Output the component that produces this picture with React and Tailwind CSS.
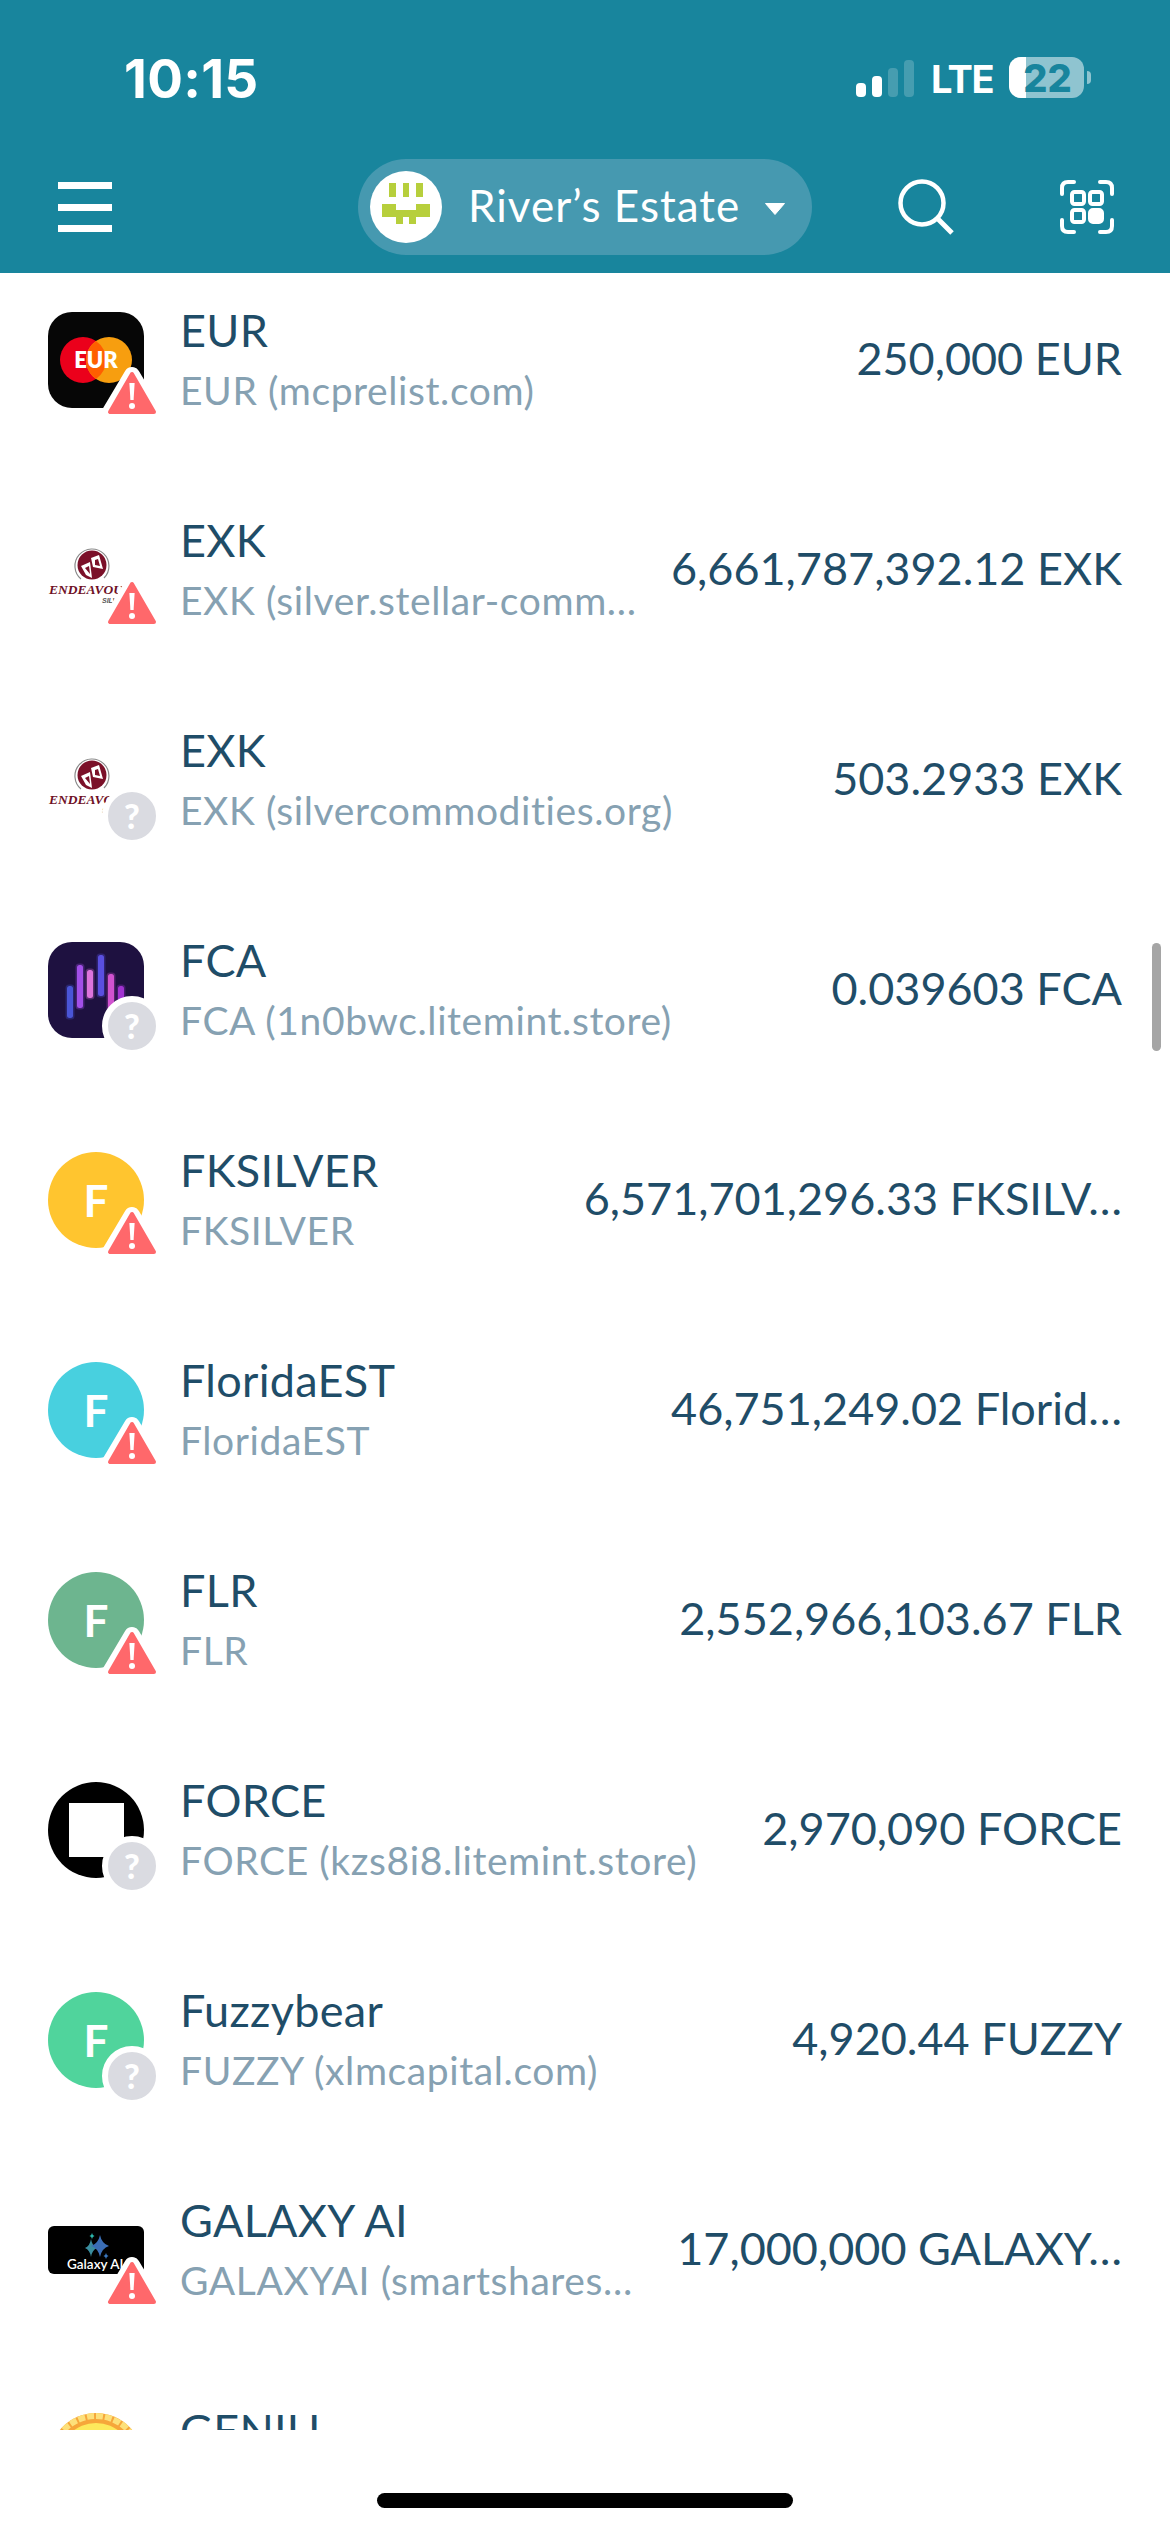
import React from 'react';

const ASSETS = [
  { title: 'EUR', sub: 'EUR (mcprelist.com)', amount: '250,000 EUR', icon: 'eur', badge: 'warn' },
  { title: 'EXK', sub: 'EXK (silver.stellar-comm…', amount: '6,661,787,392.12 EXK', icon: 'endeavour', badge: 'warn' },
  { title: 'EXK', sub: 'EXK (silvercommodities.org)', amount: '503.2933 EXK', icon: 'endeavour', badge: 'unknown' },
  { title: 'FCA', sub: 'FCA (1n0bwc.litemint.store)', amount: '0.039603 FCA', icon: 'fca', badge: 'unknown' },
  { title: 'FKSILVER', sub: 'FKSILVER', amount: '6,571,701,296.33 FKSILV…', icon: 'yellow', badge: 'warn' },
  { title: 'FloridaEST', sub: 'FloridaEST', amount: '46,751,249.02 Florid…', icon: 'cyan', badge: 'warn' },
  { title: 'FLR', sub: 'FLR', amount: '2,552,966,103.67 FLR', icon: 'green', badge: 'warn' },
  { title: 'FORCE', sub: 'FORCE (kzs8i8.litemint.store)', amount: '2,970,090 FORCE', icon: 'force', badge: 'unknown' },
  { title: 'Fuzzybear', sub: 'FUZZY (xlmcapital.com)', amount: '4,920.44 FUZZY', icon: 'mint', badge: 'unknown' },
  { title: 'GALAXY AI', sub: 'GALAXYAI (smartshares…', amount: '17,000,000 GALAXY…', icon: 'galaxy', badge: 'warn' },
  { title: 'GENIU', sub: '\u00a0', amount: '', icon: 'coin', badge: null },
];

function WarnBadge() {
  return (
    <svg className="absolute left-[51px] top-[51px]" width="66" height="60" viewBox="0 0 66 60">
      <path d="M33 12 L11 49 L55 49 Z" fill="#fff" stroke="#fff" strokeWidth="16" strokeLinejoin="round" />
      <path d="M33 11 L11 49 L55 49 Z" fill="#ff686b" stroke="#ff686b" strokeWidth="4" strokeLinejoin="round" />
      <path d="M30.4 20 L35.6 20 L34.6 37 L31.4 37 Z" fill="#fff" />
      <circle cx="33" cy="43" r="3" fill="#fff" />
    </svg>
  );
}

function UnknownBadge() {
  return (
    <div className="absolute left-[54px] top-[54px] flex h-[60px] w-[60px] items-center justify-center rounded-full border-[6px] border-white bg-[#dadbe1] text-[34px] leading-none font-black text-white">
      ?
    </div>
  );
}

function LetterIcon({ color }) {
  return (
    <div className={`flex h-24 w-24 items-center justify-center rounded-full text-[44px] font-bold text-white ${color}`}>
      F
    </div>
  );
}

function EurIcon() {
  return (
    <div className="h-24 w-24 overflow-hidden rounded-[24px] bg-[#060606]">
      <svg width="96" height="96" viewBox="0 0 96 96">
        <circle cx="35" cy="48" r="23" fill="#eb001b" />
        <circle cx="61" cy="48" r="23" fill="#f79e0f" />
        <path d="M48 29 A23 23 0 0 1 48 67 A23 23 0 0 1 48 29 Z" fill="#ff5f00" />
        <text x="48" y="56" textAnchor="middle" fontSize="22" fontWeight="800" fill="#fff" fontFamily="Lato, sans-serif">EUR</text>
      </svg>
    </div>
  );
}

function EndeavourIcon() {
  return (
    <svg width="96" height="96" viewBox="0 0 96 96">
      <path d="M33 57 A17 17 0 1 1 56 56" fill="none" stroke="#8a8a8a" strokeWidth="1.2" />
      <circle cx="44" cy="43" r="14.5" fill="#7b1029" />
      <path d="M33 44 L42 40 L44 56 L38 53 Z M43 36 L51 33 L55 47 L45 45 Z" fill="#fff" />
      <path d="M37 46 L41 44 L42 52 Z M47 38 L50 37 L52 44 L47 43 Z" fill="#7b1029" />
      <text x="1" y="72" fontSize="13.5" fontWeight="700" fontStyle="italic" fill="#6e1026" fontFamily="'Liberation Serif', serif">ENDEAVOUR</text>
      <text x="54" y="81" fontSize="7" fontWeight="700" fontStyle="italic" fill="#555" fontFamily="'Liberation Sans', sans-serif">SILVER</text>
    </svg>
  );
}

function FcaIcon() {
  const bars = [
    [19, 44, 32, '#4a55d6'],
    [29, 23, 43, '#a24fe8'],
    [39, 28, 28, '#dd74dc'],
    [50, 13, 41, '#5a4fe0'],
    [60, 32, 36, '#d052cf'],
    [70, 44, 24, '#a032d0'],
  ];
  return (
    <div className="h-24 w-24 overflow-hidden rounded-[24px] bg-[#1e1140]">
      <svg width="96" height="96" viewBox="0 0 96 96">
        {bars.map(([x, y, h, fill]) => (
          <g key={x}>
            <rect x={x - 1.5} y={y - 1.5} width="9" height={h + 3} rx="3.5" fill={fill} fillOpacity="0.3" />
            <rect x={x} y={y} width="6" height={h} rx="2.5" fill={fill} />
          </g>
        ))}
      </svg>
    </div>
  );
}

function ForceIcon() {
  return (
    <div className="flex h-24 w-24 items-center justify-center rounded-full bg-black">
      <div className="h-[54px] w-[55px] bg-white" />
    </div>
  );
}

function GalaxyIcon() {
  const star = (cx, cy, rx, ry) =>
    `M${cx} ${cy - ry} Q${cx + rx * 0.2} ${cy - ry * 0.2} ${cx + rx} ${cy} Q${cx + rx * 0.2} ${cy + ry * 0.2} ${cx} ${cy + ry} Q${cx - rx * 0.2} ${cy + ry * 0.2} ${cx - rx} ${cy} Q${cx - rx * 0.2} ${cy - ry * 0.2} ${cx} ${cy - ry} Z`;
  return (
    <div className="flex h-24 w-24 items-center">
      <svg className="rounded-[6px] bg-black" width="96" height="48" viewBox="0 0 96 48">
        <path d={star(43, 22, 6, 9)} fill="#3a8d9e" />
        <path d={star(52, 20, 9, 11)} fill="#3a6db5" />
        <path d={star(44, 10, 2.5, 3)} fill="#2bb5a8" />
        <path d={star(58, 30, 2.5, 3)} fill="#3a78c0" />
        <text x="19" y="43" fontSize="13.5" fontWeight="600" fill="#fff" fontFamily="Lato, sans-serif">Galaxy AI</text>
      </svg>
    </div>
  );
}

function CoinIcon() {
  return (
    <svg width="96" height="96" viewBox="0 0 96 96">
      <circle cx="48" cy="48" r="47" fill="#f6a63a" />
      <circle cx="48" cy="48" r="44" fill="none" stroke="#fde07a" strokeWidth="6" strokeDasharray="7 2" />
      <circle cx="48" cy="48" r="37" fill="#fde95c" />
    </svg>
  );
}

function AssetIcon({ type, badge }) {
  return (
    <div className="relative h-24 w-24 shrink-0">
      {type === 'eur' && <EurIcon />}
      {type === 'endeavour' && <EndeavourIcon />}
      {type === 'fca' && <FcaIcon />}
      {type === 'force' && <ForceIcon />}
      {type === 'galaxy' && <GalaxyIcon />}
      {type === 'coin' && <CoinIcon />}
      {type === 'yellow' && <LetterIcon color="bg-[#ffc52f]" />}
      {type === 'cyan' && <LetterIcon color="bg-[#48d0df]" />}
      {type === 'green' && <LetterIcon color="bg-[#6db58f]" />}
      {type === 'mint' && <LetterIcon color="bg-[#50d49c]" />}
      {badge === 'warn' && <WarnBadge />}
      {badge === 'unknown' && <UnknownBadge />}
    </div>
  );
}

function AssetRow({ item }) {
  return (
    <div className="flex h-[210px] items-center pl-12 pr-12">
      <AssetIcon type={item.icon} badge={item.badge} />
      <div className="ml-[36px] flex flex-col whitespace-nowrap">
        <span className="text-[45px] leading-[60px] tracking-[0.3px] text-[#1f4d68]">{item.title}</span>
        <span className="text-[39px] leading-[60px] tracking-[0.6px] text-[#86a1b2]">{item.sub}</span>
      </div>
      <span className="ml-auto -mt-1 whitespace-nowrap text-[45px] leading-[60px] text-[#1f4d68]">{item.amount}</span>
    </div>
  );
}

function StatusBar() {
  return (
    <div className="flex h-[159px] items-start pl-[124px] pr-[79px] pt-[57px] text-white">
      <span className="text-[53px] leading-[44px] font-bold tracking-[0.3px] font-[Inter,sans-serif]">10:15</span>
      <div className="ml-auto flex h-[41px] items-center">
        <svg width="58" height="37" viewBox="0 0 58 37" className="mt-[2px]">
          <rect x="0" y="23" width="10" height="14" rx="4" fill="#fff" />
          <rect x="16" y="16" width="10" height="21" rx="4" fill="#fff" />
          <rect x="32" y="8" width="10" height="29" rx="4" fill="#fff" fillOpacity="0.2" />
          <rect x="48" y="0" width="10" height="37" rx="4" fill="#fff" fillOpacity="0.2" />
        </svg>
        <span className="ml-[17px] mt-[3px] w-[60px] text-[38px] leading-none font-bold tracking-[-1.5px] whitespace-nowrap font-[Inter,sans-serif]">LTE</span>
        <div className="relative ml-[18px] flex h-[41px] w-[75px] rounded-[12px] bg-[#8fc4d0]">
          <div className="h-full w-[17px] rounded-l-[12px] bg-white" />
          <span className="absolute inset-0 flex items-center justify-center pl-[2px] text-[38px] leading-none font-extrabold text-[#18859d] font-[Inter,sans-serif]">22</span>
        </div>
        <div className="ml-[3px] h-[13px] w-[4px] rounded-r-full bg-[#8fc4d0]" />
      </div>
    </div>
  );
}

function NavBar() {
  return (
    <div className="flex h-24 items-center pl-[58px] text-white">
      <div className="flex h-[50px] w-[54px] flex-col justify-between">
        <div className="h-[7px] bg-white" />
        <div className="h-[7px] bg-white" />
        <div className="h-[7px] bg-white" />
      </div>
      <div className="ml-[246px] flex h-24 w-[454px] items-center rounded-full bg-[#4699b0] pl-3">
        <div className="h-[72px] w-[72px] rounded-full bg-white">
          <svg width="72" height="72" viewBox="0 0 72 72" fill="#b7cf3c">
            <rect x="19" y="12" width="7" height="14" />
            <rect x="33" y="12" width="6" height="14" />
            <rect x="46" y="12" width="7" height="14" />
            <path d="M12 33 H26 V39 H46 V33 H60 V46 H46 V53 H39 V46 H33 V53 H26 V46 H12 Z" />
          </svg>
        </div>
        <span className="ml-[26px] -mt-[4px] w-[269px] text-[44px] leading-none tracking-[1px] whitespace-nowrap">River’s Estate</span>
        <svg className="ml-[27px] mt-[4px]" width="22" height="12" viewBox="0 0 22 12">
          <path d="M1.5 0.5 H20.5 L11 11.5 Z" fill="#fff" stroke="#fff" strokeLinejoin="round" />
        </svg>
      </div>
      <svg className="ml-[86px]" width="56" height="56" viewBox="0 0 56 56" fill="none" stroke="#fff">
        <circle cx="24" cy="24" r="21.5" strokeWidth="4.5" />
        <path d="M40 40 L54 54" strokeWidth="5" />
      </svg>
      <svg className="ml-[106px]" width="54" height="54" viewBox="0 0 54 54" fill="none" stroke="#fff" strokeWidth="4" strokeLinecap="round">
        <path d="M2 14 V8 Q2 2 8 2 H14" />
        <path d="M40 2 H46 Q52 2 52 8 V14" />
        <path d="M2 40 V46 Q2 52 8 52 H14" />
        <path d="M40 52 H46 Q52 52 52 46 V40" />
        <rect x="12" y="12" width="12" height="12" rx="2.5" />
        <rect x="30" y="12" width="12" height="12" rx="2.5" />
        <rect x="12" y="30" width="12" height="12" rx="2.5" />
        <rect x="30" y="30" width="12" height="12" rx="3" fill="#fff" />
      </svg>
    </div>
  );
}

export default function App() {
  return (
    <div className="flex h-[2532px] w-[1170px] flex-col overflow-hidden bg-white font-[Lato,sans-serif]">
      <header className="h-[273px] shrink-0 bg-[#18859d]">
        <StatusBar />
        <NavBar />
      </header>

      <div className="relative h-[2157px] shrink-0 overflow-hidden">
        <div className="-mt-[18px]">
          {ASSETS.map((item, i) => (
            <AssetRow key={i} item={item} />
          ))}
        </div>
        {/* scroll indicator */}
        <div className="absolute right-[9px] top-[670px] h-[108px] w-[9px] rounded-full bg-[#a5a5a5]" />
      </div>

      <div className="flex flex-1 justify-center pt-[63px]">
        <div className="h-[15px] w-[416px] rounded-full bg-black" />
      </div>
    </div>
  );
}
